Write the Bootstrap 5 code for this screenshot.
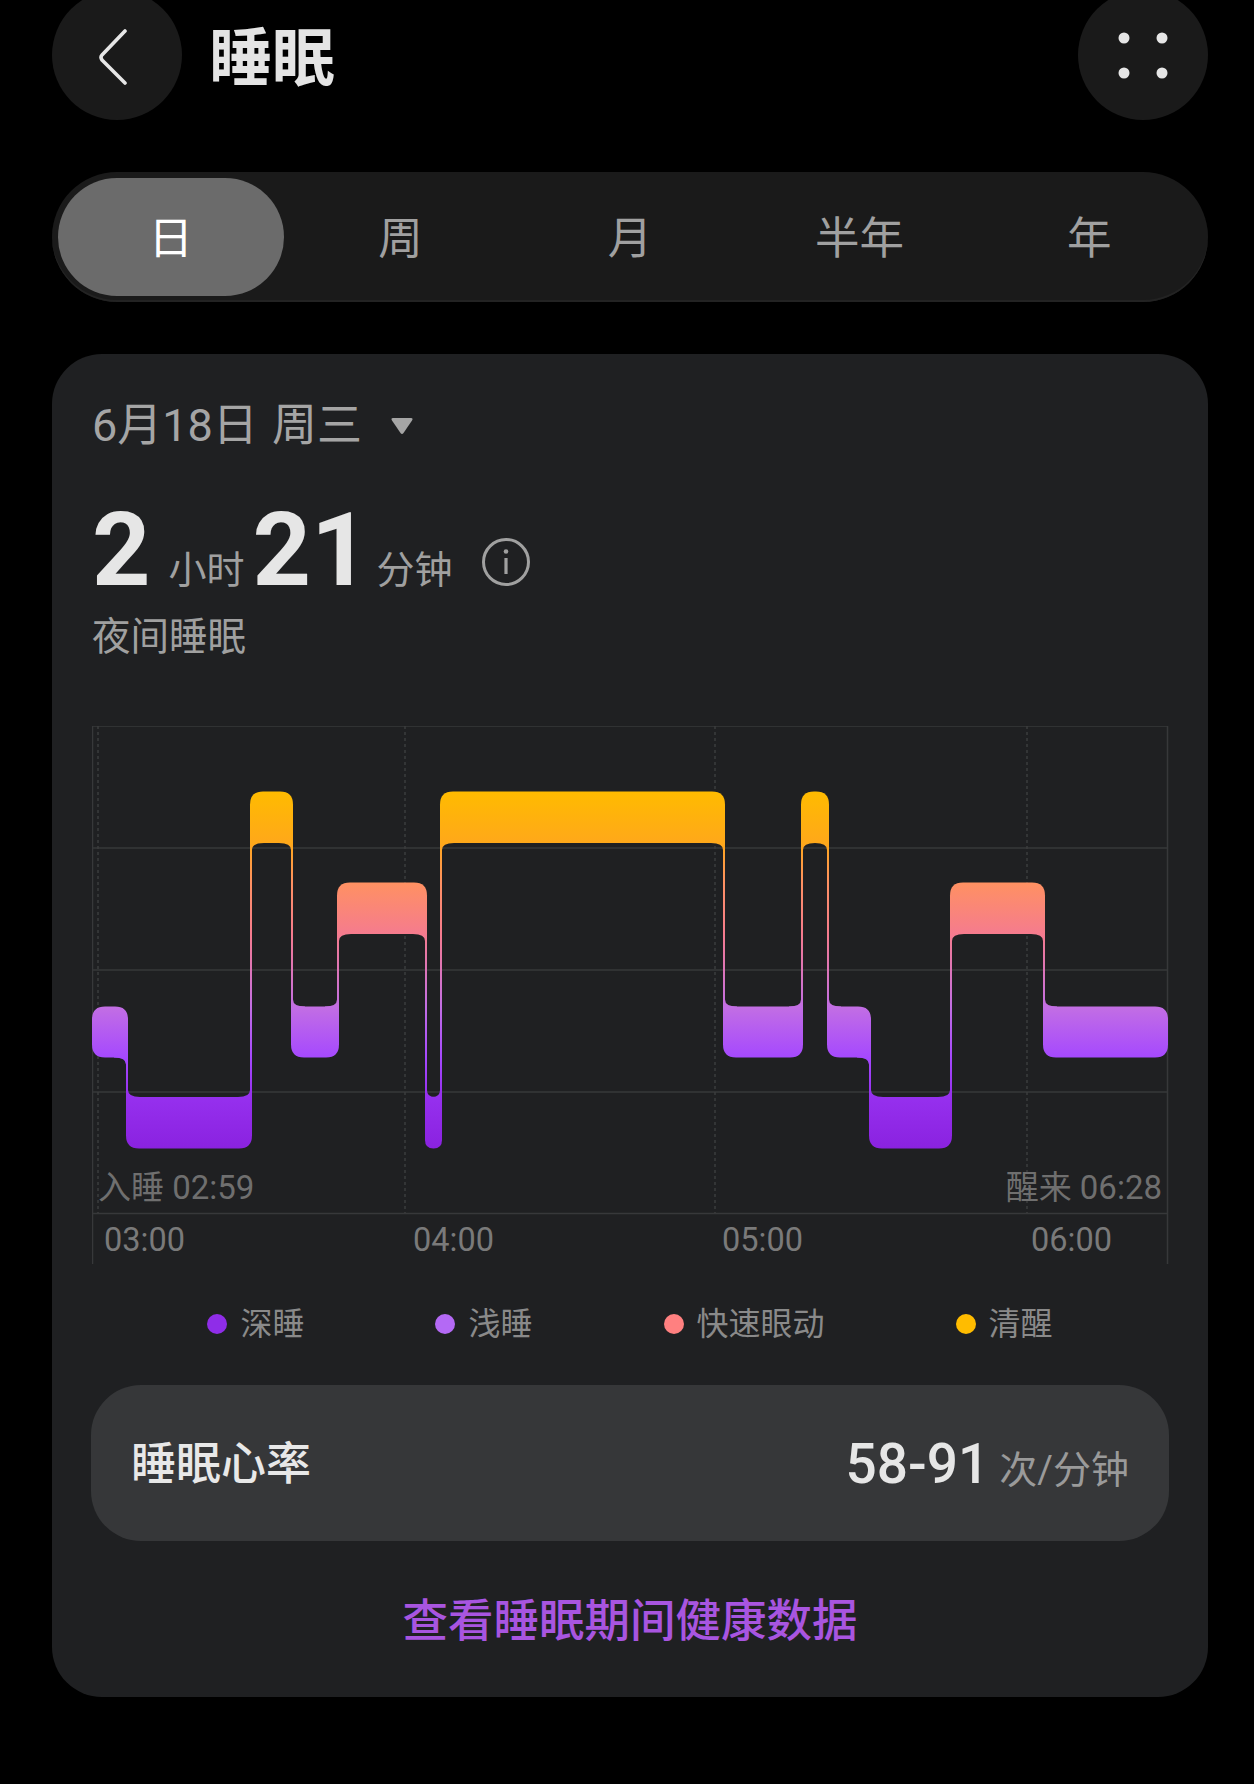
<!DOCTYPE html>
<html lang="zh-CN">
<head>
  <meta charset="UTF-8" />
  <meta name="viewport" content="width=device-width, initial-scale=1.0"/>
  <title>睡眠</title>
  <link href="https://cdn.jsdelivr.net/npm/bootstrap@5.3.3/dist/css/bootstrap.min.css" rel="stylesheet"/>
  <style>
    html, body { height: 100%; overflow: hidden; }
    body { background: #000; font-family: Roboto, "Noto Sans CJK SC", sans-serif; color: #e6e6e6; }
    .page-wrap { width: 1156px; margin-left: 52px; margin-top: -10px; }

    .round-btn { width: 130px; height: 130px; background: #1a1a1a; border: 0; padding: 0; }
    .page-title { font-size: 63px; font-weight: 700; line-height: 1; margin: 6px 0 0 27px; color: #e4e4e4; }
    .back-icon { margin-left: -7px; margin-top: 3px; }

    .sleep-tabs { height: 130px; margin-top: 52px; padding: 6px 4px; background: #1a1a1a; border-radius: 65px; box-shadow: inset 0 -2px 0 #232323; }
    .sleep-tabs .nav-item { padding: 0 2px; }
    .sleep-tabs .nav-link { height: 118px; padding: 2px 0 0; border-radius: 59px; font-size: 44.5px; line-height: 118px; color: #a0a0a0; }
    .sleep-tabs .nav-link.active { background: #6b6b6b; color: #fff; }

    .sleep-card { margin-top: 52px; height: 1343px; padding: 41px 40px 0; background: #1f2022; border: 0; border-radius: 50px; }
    .date-row { height: 60px; padding-top: 2px; font-size: 45px; line-height: 60px; color: #a5a5a5; }
    .date-row .gap-word { margin-left: 14px; }
    .date-arrow { margin-left: 28px; }
    .duration-row { height: 155px; padding-top: 30px; }
    .big-num { font-size: 102px; line-height: 130px; font-weight: 700; color: #e6e6e6; }
    .unit-text { position: relative; top: -2px; font-size: 38px; color: #a0a0a0; margin-left: 18px; margin-right: 8px; }
    .unit-last { margin-left: 7px; margin-right: 0; }
    .info-icon { margin-left: 29px; margin-top: 28px; }
    .night-label { height: 54px; font-size: 38.5px; line-height: 54px; color: #a0a0a0; }

    .chart-box { height: 538px; margin-top: 62px; width: 1077px; }
    .chart-box svg { display: block; }
    .sleep-marks { left: 6px; right: 7px; top: 439px; font-size: 33px; line-height: 46px; color: #6f6f6f; }
    .time-axis { left: 12px; top: 491px; font-size: 32.5px; line-height: 46px; color: #7a7a7a; }
    .time-axis span { width: 309px; }
    .time-axis span:last-child { width: auto; }

    .legend-row { height: 44px; margin-top: 38px; gap: 131px; font-size: 32px; line-height: 44px; color: #8a8a8a; }
    .legend-dot { width: 20px; height: 20px; margin-right: 13px; border-radius: 50%; }

    .rate-row { height: 156px; margin: 39px -1px 0; padding: 3px 40px 0; background: #363739; border-radius: 50px; }
    .rate-name { font-size: 45px; font-weight: 500; color: #e8e8e8; }
    .rate-num { font-size: 55px; font-weight: 500; color: #e6e6e6; }
    .rate-unit { font-size: 38px; color: #9a9a9a; margin-left: 10px; }

    .health-link { display: block; height: 60px; margin-top: 51px; font-size: 45.5px; font-weight: 500; line-height: 60px; text-align: center; text-decoration: none; color: #a855e0; }
  </style>
</head>
<body>
  <div class="page-wrap">
    <div class="d-flex align-items-center">
      <button class="round-btn rounded-circle d-flex align-items-center justify-content-center" type="button" aria-label="返回">
        <svg class="back-icon" width="34" height="56" viewBox="0 0 34 56" fill="none"><path d="M28 2 L5 26 Q3 28 5 31 L28 54" stroke="#e6e6e6" stroke-width="3.6" stroke-linecap="round" stroke-linejoin="round"/></svg>
      </button>
      <h1 class="page-title">睡眠</h1>
      <button class="round-btn rounded-circle d-flex align-items-center justify-content-center ms-auto" type="button" aria-label="更多">
        <svg width="52" height="48" viewBox="0 0 52 48" fill="#e6e6e6"><circle cx="7" cy="7" r="5.5"/><circle cx="45" cy="7" r="5.5"/><circle cx="7" cy="42" r="5.5"/><circle cx="45" cy="42" r="5.5"/></svg>
      </button>
    </div>

    <ul class="nav nav-pills nav-justified sleep-tabs">
      <li class="nav-item"><a class="nav-link active" href="#">日</a></li>
      <li class="nav-item"><a class="nav-link" href="#">周</a></li>
      <li class="nav-item"><a class="nav-link" href="#">月</a></li>
      <li class="nav-item"><a class="nav-link" href="#">半年</a></li>
      <li class="nav-item"><a class="nav-link" href="#">年</a></li>
    </ul>

    <div class="card sleep-card">
      <div class="date-row d-flex align-items-center">
        <span>6月18日<span class="gap-word">周三</span></span>
        <svg class="date-arrow" width="24" height="18" viewBox="0 0 24 18" fill="#a5a5a5"><path d="M3 1 H21 Q23.5 1 22 3.5 L13.5 16 Q12 18 10.5 16 L2 3.5 Q.5 1 3 1Z"/></svg>
      </div>

      <div class="duration-row d-flex align-items-baseline">
        <span class="big-num">2</span><span class="unit-text">小时</span>
        <span class="big-num">21</span><span class="unit-text unit-last">分钟</span>
        <svg class="info-icon align-self-center" width="48" height="48" viewBox="0 0 48 48" fill="none"><circle cx="24" cy="24" r="22.5" stroke="#a0a0a0" stroke-width="3"/><circle cx="24" cy="13.5" r="2.3" fill="#a0a0a0"/><path d="M24 20 V36" stroke="#a0a0a0" stroke-width="3.2"/></svg>
      </div>

      <div class="night-label">夜间睡眠</div>

      <div class="chart-box position-relative">
        <svg id="sleep-chart" width="1077" height="538" viewBox="92 726 1077 538"></svg>
        <div class="sleep-marks position-absolute d-flex justify-content-between">
          <span>入睡 02:59</span>
          <span>醒来 06:28</span>
        </div>
        <div class="time-axis position-absolute d-flex">
          <span>03:00</span><span>04:00</span><span>05:00</span><span>06:00</span>
        </div>
      </div>

      <div class="legend-row d-flex justify-content-center">
        <div class="d-flex align-items-center"><i class="legend-dot" style="background:#8f2de8"></i>深睡</div>
        <div class="d-flex align-items-center"><i class="legend-dot" style="background:#b469f5"></i>浅睡</div>
        <div class="d-flex align-items-center"><i class="legend-dot" style="background:#ff8080"></i>快速眼动</div>
        <div class="d-flex align-items-center"><i class="legend-dot" style="background:#ffbc00"></i>清醒</div>
      </div>

      <div class="rate-row d-flex align-items-center justify-content-between">
        <span class="rate-name">睡眠心率</span>
        <span><span class="rate-num">58-91</span><span class="rate-unit">次/分钟</span></span>
      </div>

      <a class="health-link" href="#">查看睡眠期间健康数据</a>
    </div>
  </div>

  <script>
    // y range of each stage band: 0 awake, 1 rem, 2 light, 3 deep
    const bands = [[791.5, 843], [882.5, 934], [1006.5, 1057.5], [1097, 1148.5]];
    // x0, x1, band
    const stages = [
      [92, 128, 2], [126, 252, 3], [250, 293, 0], [291, 339, 2], [337, 427, 1],
      [425, 442, 3], [440, 725, 0], [723, 803, 2], [801, 829, 0], [827, 871, 2],
      [869, 952, 3], [950, 1045, 1], [1043, 1168, 2]
    ];

    function barPath(x0, x1, y0, y1, tl, tr, br, bl) {
      return `M${x0 + tl} ${y0} H${x1 - tr} Q${x1} ${y0} ${x1} ${y0 + tr}` +
        ` V${y1 - br} Q${x1} ${y1} ${x1 - br} ${y1} H${x0 + bl} Q${x0} ${y1} ${x0} ${y1 - bl}` +
        ` V${y0 + tl} Q${x0} ${y0} ${x0 + tl} ${y0}Z`;
    }

    function renderChart() {
      let grid = "";
      [726, 848, 970, 1092, 1213.5].forEach(y => {
        grid += `<path d="M92 ${y} H1168" stroke="#37383a" stroke-width="1.5"/>`;
      });
      [92.5, 1167.5].forEach(x => {
        grid += `<path d="M${x} 726 V1264" stroke="#37383a" stroke-width="1.5"/>`;
      });
      [98, 405, 715, 1027].forEach(x => {
        grid += `<path d="M${x} 726 V1213" stroke="#3b3c3e" stroke-width="1.5" stroke-dasharray="3 3"/>`;
      });

      // one path per piece, overlapping subpaths in one path would cancel out
      const pieces = [];
      stages.forEach((s, i) => {
        const [x0, x1, b] = s;
        const [y0, y1] = bands[b];
        const r = Math.min(13, (x1 - x0) / 2);
        const prev = stages[i - 1], next = stages[i + 1];
        // a corner stays square where the strip to the neighbour leaves the bar
        const tl = prev && prev[2] < b ? 0 : r;
        const bl = prev && prev[2] > b ? 0 : r;
        const tr = next && next[2] < b ? 0 : r;
        const br = next && next[2] > b ? 0 : r;
        pieces.push(barPath(x0, x1, y0, y1, tl, tr, br, bl));

        if (next) {
          // thin strip plus the two little fillets where it meets each bar
          const sx0 = next[0], sx1 = x1;
          const upper = b < next[2] ? s : next, lower = b < next[2] ? next : s;
          const top = bands[upper[2]][1], bot = bands[lower[2]][0];
          pieces.push(`M${sx0} ${top - 1} H${sx1} V${bot + 1} H${sx0}Z`);

          const uw = Math.min(12, (upper[1] - upper[0] - 2) / 2);
          const lw = Math.min(12, (lower[1] - lower[0] - 2) / 2);
          if (upper === s) {
            pieces.push(`M${sx0} ${top - 1} H${sx0 - uw} V${top} Q${sx0} ${top} ${sx0} ${top + 7}Z`);
            pieces.push(`M${sx1} ${bot + 1} H${sx1 + lw} V${bot} Q${sx1} ${bot} ${sx1} ${bot - 7}Z`);
          } else {
            pieces.push(`M${sx1} ${top - 1} H${sx1 + uw} V${top} Q${sx1} ${top} ${sx1} ${top + 7}Z`);
            pieces.push(`M${sx0} ${bot + 1} H${sx0 - lw} V${bot} Q${sx0} ${bot} ${sx0} ${bot - 7}Z`);
          }
        }
      });

      document.getElementById("sleep-chart").innerHTML = `
        <defs>
          <linearGradient id="stage-fill" gradientUnits="userSpaceOnUse" x1="0" y1="791.5" x2="0" y2="1148.5">
            <stop offset="0" stop-color="#ffbb00"/>
            <stop offset=".145" stop-color="#ffa81a"/>
            <stop offset=".255" stop-color="#ff9162"/>
            <stop offset=".4" stop-color="#f57b8e"/>
            <stop offset=".604" stop-color="#c26ee4"/>
            <stop offset=".747" stop-color="#a548ff"/>
            <stop offset=".855" stop-color="#9630ee"/>
            <stop offset="1" stop-color="#8a22e0"/>
          </linearGradient>
        </defs>
        ${grid}
        <g fill="url(#stage-fill)">${pieces.map(p => `<path d="${p}"/>`).join("")}</g>`;
    }

    document.addEventListener("DOMContentLoaded", renderChart);
  </script>
  <script src="https://cdn.jsdelivr.net/npm/bootstrap@5.3.3/dist/js/bootstrap.bundle.min.js"></script>
</body>
</html>
